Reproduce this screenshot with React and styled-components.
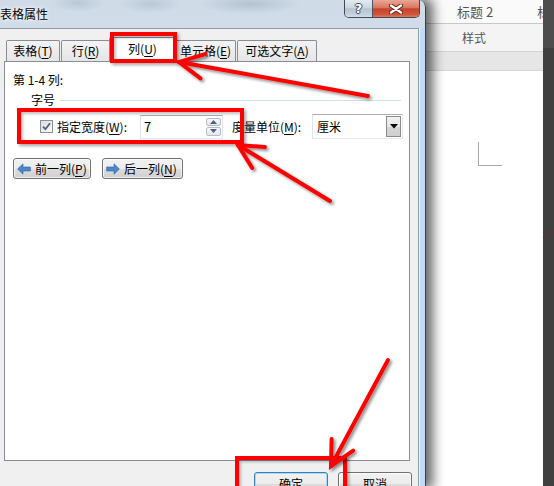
import React from "react";
import styled, { createGlobalStyle } from "styled-components";

const Global = createGlobalStyle`
  html, body { margin: 0; padding: 0; background: #fff; }
  body { font-family: "Noto Sans CJK SC", "Noto Sans", sans-serif; }
`;

const FONT = `"Noto Sans CJK SC", "Noto Sans", sans-serif`;

const Screen = styled.div`
  position: relative;
  width: 554px;
  height: 486px;
  overflow: hidden;
  display: flex;
  font-family: ${FONT};
  font-size: 12px;
  color: #000;
`;

/* ---------- dialog window ---------- */
const Dialog = styled.div`
  position: relative;
  z-index: 1;
  width: 426px;
  flex-shrink: 0;
  box-sizing: border-box;
  display: flex;
  flex-direction: column;
  border-right: 1px solid #33404d;
  border-top-right-radius: 7px;
  background:
    radial-gradient(ellipse 26px 9px at 78px 3px, rgba(110, 130, 150, 0.22), transparent),
    radial-gradient(ellipse 30px 9px at 150px 4px, rgba(110, 130, 150, 0.22), transparent),
    radial-gradient(ellipse 50px 10px at 250px 4px, rgba(110, 130, 150, 0.28), transparent),
    linear-gradient(#cfdbe7, #dde6ef 60%, #e5ebf2);
  box-shadow: 4px 0 12px 3px rgba(0, 0, 0, 0.6);
`;

const TitleBar = styled.div`
  height: 28px;
  flex-shrink: 0;
  display: flex;
  align-items: flex-start;
  padding-right: 5px;
`;

const Title = styled.div`
  flex: 1;
  margin-top: 6px;
  font-size: 12px;
  line-height: 16px;
  color: #000;
  text-shadow: 0 0 6px #fff, 0 0 3px #fff;
`;

const CaptionGroup = styled.div`
  display: flex;
  height: 18px;
  box-sizing: border-box;
  border: 1px solid #3d4b59;
  border-top: none;
  border-radius: 0 0 5px 5px;
  overflow: hidden;
`;

const CaptionButton = styled.div`
  width: ${(p) => p.$w}px;
  display: flex;
  align-items: center;
  justify-content: center;
  background: ${(p) =>
    p.$close
      ? "linear-gradient(#e9a797, #d9765f 45%, #c6432b 52%, #d0553a 85%, #e07a5a)"
      : "linear-gradient(#e3eaf1, #ccd7e2 45%, #b5c4d3 52%, #c3d1de 85%, #d4dfe9)"};
  & + & {
    border-left: 1px solid #4a5866;
  }
`;

const HelpGlyph = styled.span`
  font-family: "DejaVu Sans", sans-serif;
  font-weight: bold;
  font-size: 13px;
  line-height: 13px;
  color: #fff;
  text-shadow: -1px 0 #3a4654, 1px 0 #3a4654, 0 -1px #3a4654, 0 1px #3a4654;
`;

const ClientRow = styled.div`
  flex: 1;
  display: flex;
  min-height: 0;
`;

const Client = styled.div`
  width: 419px;
  flex-shrink: 0;
  box-sizing: border-box;
  background: #f0f0f0;
  border-top: 1px solid #8f9ba7;
  border-right: 1px solid #8f9ba7;
  display: flex;
  flex-direction: column;
  padding: 8px 8px 0 4px;
`;

const FrameStrip = styled.div`
  flex: 1;
  background: linear-gradient(to right, #eef3f8 0 1px, #bfdbf6 1px);
`;

/* ---------- tabs ---------- */
const TabRow = styled.div`
  height: 24px;
  display: flex;
  align-items: flex-end;
  gap: 1px;
  padding-left: 2px;
`;

const Tab = styled.div`
  box-sizing: border-box;
  width: ${(p) => p.$w}px;
  height: ${(p) => (p.$active ? 25 : 21)}px;
  margin: ${(p) => (p.$active ? "0 -2px -1px -2px" : "0")};
  position: relative;
  z-index: ${(p) => (p.$active ? 2 : 0)};
  border: 1px solid #898c95;
  border-bottom: none;
  border-radius: 2px 2px 0 0;
  background: ${(p) => (p.$active ? "#fff" : "linear-gradient(#f3f3f3, #e6e6e6)")};
  display: flex;
  align-items: center;
  justify-content: center;
  padding-bottom: ${(p) => (p.$active ? 3 : 0)}px;
  white-space: nowrap;
  line-height: 16px;
`;

const Key = styled.span`
  text-decoration: underline;
  text-underline-offset: 2px;
`;

/* ---------- panel ---------- */
const Panel = styled.div`
  box-sizing: border-box;
  height: 400px;
  flex-shrink: 0;
  background: #fff;
  border: 1px solid #898c95;
  padding: 10px 8px 0 8px;
  display: flex;
  flex-direction: column;
`;

const Line = styled.div`
  line-height: 16px;
  white-space: nowrap;
`;

const GroupHeader = styled.div`
  margin-top: 4px;
  height: 16px;
  display: flex;
  align-items: center;
  padding-left: 18px;
  line-height: 16px;
`;

const GroupRule = styled.div`
  flex: 1;
  height: 1px;
  margin-left: 5px;
  background: #d5dfe5;
`;

const WidthRow = styled.div`
  margin-top: 6px;
  height: 25px;
  display: flex;
  align-items: center;
  padding-left: 27px;
  white-space: nowrap;
`;

const CheckBox = styled.span`
  width: 13px;
  height: 13px;
  box-sizing: border-box;
  border: 1px solid #8e8f8f;
  background: linear-gradient(135deg, #dcdcdc, #fbfbfb);
  display: flex;
  align-items: center;
  justify-content: center;
  margin-right: 4px;
  flex-shrink: 0;
`;

const FieldLabel = styled.span`
  width: ${(p) => p.$w}px;
  margin-left: ${(p) => p.$ml || 0}px;
  line-height: 16px;
  flex-shrink: 0;
`;

const TextBox = styled.div`
  box-sizing: border-box;
  width: ${(p) => p.$w}px;
  height: ${(p) => p.$h}px;
  border: 1px solid #abadb3;
  border-left-color: #e2e3ea;
  border-right-color: #e3e9ef;
  border-bottom-color: #e3e9ef;
  background: #fff;
  display: flex;
  align-items: stretch;
  flex-shrink: 0;
`;

const BoxText = styled.span`
  flex: 1;
  display: flex;
  align-items: center;
  padding-left: ${(p) => p.$pl}px;
  font-size: ${(p) => p.$fs || 12}px;
  line-height: 16px;
`;

const SpinCol = styled.div`
  width: 15px;
  display: flex;
  flex-direction: column;
  gap: 1px;
  padding: 2px 1px 2px 0;
`;

const SpinBtn = styled.div`
  flex: 1;
  box-sizing: border-box;
  border: 1px solid #b4bcc6;
  border-radius: 2px;
  background: linear-gradient(#f7f8fa, #e3e6ea);
  display: flex;
  align-items: center;
  justify-content: center;
`;

const DropBtn = styled.div`
  width: 15px;
  box-sizing: border-box;
  margin: 1px;
  border: 1px solid #8a8a8a;
  background: linear-gradient(#f2f2f2, #e6e6e6 50%, #d6d6d6 51%, #cfcfcf);
  display: flex;
  align-items: center;
  justify-content: center;
`;

const NavRow = styled.div`
  margin-top: 19px;
  display: flex;
  gap: 11px;
`;

const PushButton = styled.div`
  box-sizing: border-box;
  width: ${(p) => p.$w}px;
  height: ${(p) => p.$h}px;
  border: 1px solid ${(p) => (p.$default ? "#3c7fb1" : "#707070")};
  border-radius: 3px;
  background: linear-gradient(#f2f2f2, #ebebeb 50%, #dddddd 51%, #cfcfcf);
  box-shadow: inset 0 0 0 1px ${(p) => (p.$default ? "#a4dcf8" : "rgba(255,255,255,0.7)")};
  display: flex;
  align-items: center;
  justify-content: ${(p) => (p.$icon ? "flex-start" : "center")};
  padding-left: ${(p) => (p.$icon ? 3 : 0)}px;
  gap: 4px;
  white-space: nowrap;
  line-height: 16px;
  flex-shrink: 0;
`;

const ButtonLabel = styled.span`
  white-space: nowrap;
`;

const FooterRow = styled.div`
  margin-top: 11px;
  margin-right: -2px;
  display: flex;
  justify-content: flex-end;
  gap: 10px;
`;

/* ---------- word background ---------- */
const Word = styled.div`
  flex: 1;
  min-width: 0;
  display: flex;
  flex-direction: column;
  background: #fff;
  overflow: hidden;
`;

const RibbonRow = styled.div`
  height: ${(p) => p.$h}px;
  flex-shrink: 0;
  box-sizing: border-box;
  background: ${(p) => p.$bg};
  border-bottom: 1px solid ${(p) => p.$line};
  display: flex;
  align-items: center;
  gap: 44px;
  padding-left: ${(p) => p.$pl}px;
  white-space: nowrap;
  font-size: ${(p) => p.$fs || 12}px;
  color: #555;
`;

const Doc = styled.div`
  flex: 1;
  padding: 71px 0 0 52px;
`;

const CornerMark = styled.div`
  width: 23px;
  height: 23px;
  border-left: 1px solid #a9a9a9;
  border-bottom: 1px solid #a9a9a9;
`;

const DarkStrip = styled.div`
  width: 11px;
  flex-shrink: 0;
  background: linear-gradient(#4d4d4d 0 48px, #404040 48px);
`;

/* ---------- annotations ---------- */
const RedBox = styled.div`
  position: absolute;
  left: ${(p) => p.$x}px;
  top: ${(p) => p.$y}px;
  width: ${(p) => p.$w}px;
  height: ${(p) => p.$h}px;
  box-sizing: border-box;
  border: 4px solid #ff0000;
  box-shadow: 2px 2px 3px rgba(0, 0, 0, 0.35), inset 2px 2px 3px rgba(0, 0, 0, 0.25);
  z-index: 5;
  pointer-events: none;
`;

const Overlay = styled.svg`
  position: absolute;
  left: 0;
  top: 0;
  z-index: 6;
  pointer-events: none;
`;

const arrows = [
  { tip: [179, 62], tail: [368, 96] },
  { tip: [238, 145], tail: [330, 201] },
  { tip: [331, 466], tail: [388, 360] },
];

function barbs(tip, tail, len = 27, spread = 27) {
  const dx = tail[0] - tip[0];
  const dy = tail[1] - tip[1];
  const a = Math.atan2(dy, dx);
  const r = (spread * Math.PI) / 180;
  return [a - r, a + r].map((ang) => [tip[0] + len * Math.cos(ang), tip[1] + len * Math.sin(ang)]);
}

function Arrows() {
  return (
    <Overlay width="554" height="486" viewBox="0 0 554 486">
      <defs>
        <filter id="sh" x="-20%" y="-20%" width="140%" height="140%">
          <feDropShadow dx="2" dy="2" stdDeviation="1.5" floodColor="#000" floodOpacity="0.45" />
        </filter>
      </defs>
      <line x1="543" y1="238" x2="554" y2="230" stroke="#7a2a2a" strokeWidth="1.5" opacity="0.6" />
      {arrows.map((ar, i) => {
        const [b1, b2] = barbs(ar.tip, ar.tail);
        return (
          <g key={i} filter="url(#sh)" stroke="#ff0000" strokeWidth="4" strokeLinecap="round" fill="none">
            <line x1={ar.tail[0]} y1={ar.tail[1]} x2={ar.tip[0]} y2={ar.tip[1]} />
            <polyline points={`${b1[0]},${b1[1]} ${ar.tip[0]},${ar.tip[1]} ${b2[0]},${b2[1]}`} strokeLinejoin="miter" />
          </g>
        );
      })}
    </Overlay>
  );
}

function NavArrow({ dir }) {
  const flip = dir === "right" ? "scale(-1,1) translate(-14,0)" : undefined;
  return (
    <svg width="14" height="12" viewBox="0 0 14 12">
      <g transform={flip}>
        <path d="M0.6 6 L6 0.8 L6 4 L13.4 4 L13.4 8 L6 8 L6 11.2 Z" fill="#4a86c8" stroke="#2f65a5" strokeWidth="0.6" />
      </g>
    </svg>
  );
}

export default function App() {
  return (
    <>
      <Global />
      <Screen>
        <Dialog>
          <TitleBar>
            <Title>表格属性</Title>
            <CaptionGroup>
              <CaptionButton $w={27}>
                <HelpGlyph>?</HelpGlyph>
              </CaptionButton>
              <CaptionButton $w={46} $close>
                <svg width="14" height="10" viewBox="0 0 14 10">
                  <path d="M2 1.5 L12 8.5 M12 1.5 L2 8.5" stroke="#5a2418" strokeWidth="4.2" strokeLinecap="round" />
                  <path d="M2 1.5 L12 8.5 M12 1.5 L2 8.5" stroke="#fff" strokeWidth="2.4" strokeLinecap="round" />
                </svg>
              </CaptionButton>
            </CaptionGroup>
          </TitleBar>
          <ClientRow>
            <Client>
              <TabRow>
                <Tab $w={54}>表格(<Key>T</Key>)</Tab>
                <Tab $w={49}>行(<Key>R</Key>)</Tab>
                <Tab $w={67} $active>列(<Key>U</Key>)</Tab>
                <Tab $w={61}>单元格(<Key>E</Key>)</Tab>
                <Tab $w={80}>可选文字(<Key>A</Key>)</Tab>
              </TabRow>
              <Panel>
                <Line>第 1-4 列:</Line>
                <GroupHeader>
                  字号
                  <GroupRule />
                </GroupHeader>
                <WidthRow>
                  <CheckBox>
                    <svg width="9" height="9" viewBox="0 0 9 9">
                      <path d="M1 4.6 L3.4 7.2 L8 1.2" stroke="#4d6185" strokeWidth="1.8" fill="none" />
                    </svg>
                  </CheckBox>
                  <FieldLabel $w={83}>指定宽度(<Key>W</Key>):</FieldLabel>
                  <TextBox $w={83} $h={24}>
                    <BoxText $pl={3} $fs={13}>7</BoxText>
                    <SpinCol>
                      <SpinBtn>
                        <svg width="7" height="4" viewBox="0 0 7 4"><path d="M0 4 L3.5 0 L7 4 Z" fill="#4d6185" /></svg>
                      </SpinBtn>
                      <SpinBtn>
                        <svg width="7" height="4" viewBox="0 0 7 4"><path d="M0 0 L3.5 4 L7 0 Z" fill="#4d6185" /></svg>
                      </SpinBtn>
                    </SpinCol>
                  </TextBox>
                  <FieldLabel $w={80} $ml={9}>度量单位(<Key>M</Key>):</FieldLabel>
                  <TextBox $w={91} $h={25}>
                    <BoxText $pl={4}>厘米</BoxText>
                    <DropBtn>
                      <svg width="8" height="5" viewBox="0 0 8 5"><path d="M0 0 L8 0 L4 4.5 Z" fill="#000" /></svg>
                    </DropBtn>
                  </TextBox>
                </WidthRow>
                <NavRow>
                  <PushButton $w={78} $h={21} $icon>
                    <NavArrow dir="left" />
                    <ButtonLabel>前一列(<Key>P</Key>)</ButtonLabel>
                  </PushButton>
                  <PushButton $w={81} $h={21} $icon>
                    <NavArrow dir="right" />
                    <ButtonLabel>后一列(<Key>N</Key>)</ButtonLabel>
                  </PushButton>
                </NavRow>
              </Panel>
              <FooterRow>
                <PushButton $w={74} $h={23} $default>确定</PushButton>
                <PushButton $w={74} $h={23}>取消</PushButton>
              </FooterRow>
            </Client>
            <FrameStrip />
          </ClientRow>
        </Dialog>
        <Word>
          <RibbonRow $h={24} $bg="#fafafa" $line="#c8c8c8" $pl={31} $fs={13}>
            <span>标题 2</span>
            <span>标题</span>
          </RibbonRow>
          <RibbonRow $h={28} $bg="#f4f4f4" $line="#d2d2d2" $pl={36}>
            <span>样式</span>
          </RibbonRow>
          <RibbonRow $h={19} $bg="#e6e6e6" $line="#d6d6d6" $pl={0} />
          <Doc>
            <CornerMark />
          </Doc>
        </Word>
        <DarkStrip />
        <RedBox $x={110} $y={32} $w={67} $h={31} />
        <RedBox $x={17} $y={108} $w={227} $h={36} />
        <RedBox $x={235} $y={456} $w={112} $h={40} />
        <Arrows />
      </Screen>
    </>
  );
}
